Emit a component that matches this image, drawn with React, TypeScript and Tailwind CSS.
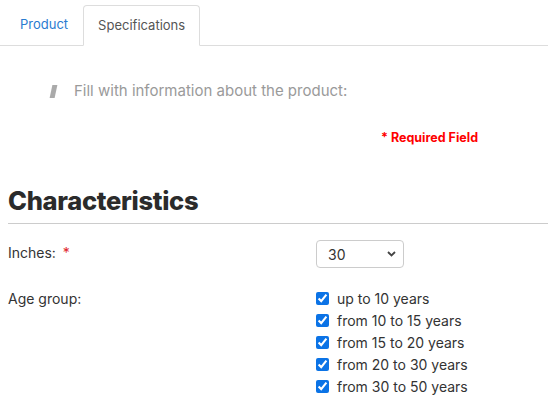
import React, { useState } from "react";

const AGE_GROUPS = [
  "up to 10 years",
  "from 10 to 15 years",
  "from 15 to 20 years",
  "from 20 to 30 years",
  "from 30 to 50 years",
];

export default function App() {
  const [tab, setTab] = useState("specs");
  const [inches, setInches] = useState("30");
  const [checked, setChecked] = useState<boolean[]>(AGE_GROUPS.map(() => true));

  return (
    <div className="w-[548px] h-[416px] bg-white overflow-hidden text-[#333] font-['Inter','Open_Sans',sans-serif]">
      {/* Tabs */}
      <div className="flex pl-[5px] pt-[5px] border-b border-[#ddd]">
        <button
          type="button"
          onClick={() => setTab("product")}
          className="h-[40px] px-[15px] text-[13px] text-[#2a7bd0] -mb-px"
        >
          Product
        </button>
        <button
          type="button"
          onClick={() => setTab("specs")}
          className="h-[41px] px-[14px] text-[13px] text-[#555] bg-white border border-[#ddd] border-b-white rounded-t-[4px] -mb-px"
        >
          Specifications
        </button>
      </div>

      {/* Intro */}
      <div className="flex items-center pl-[51px] pt-[34px]">
        <span className="w-[5px] h-[13px] bg-[#aaa] -skew-x-12 mr-[18px]" />
        <p className="text-[15px] text-[#9a9a9a]">Fill with information about the product:</p>
      </div>

      <div className="pl-[381px] pt-[26px] text-[12.5px] font-bold text-[#ff0000]">* Required Field</div>

      {/* Characteristics */}
      <div className="pl-[8px] pt-[38px]">
        <h2 className="text-[25.5px] font-extrabold text-[#2b2b2b] leading-[32px] tracking-[-0.3px] pb-[6px] border-b border-[#ccc]">
          Characteristics
        </h2>

        <div className="flex pt-[16px]">
          <div className="w-[308px] text-[14px] pt-[2px]">
            Inches: <span className="text-[#e0262b] ml-[3px]">*</span>
          </div>
          <div className="relative">
            <select
              value={inches}
              onChange={(e) => setInches(e.target.value)}
              className="appearance-none w-[88px] h-[28px] pl-[11px] text-[14px] border border-[#ccc] rounded-[4px] bg-white"
            >
              {["24", "30", "32", "40", "50"].map((v) => (
                <option key={v} value={v}>{v}</option>
              ))}
            </select>
            <svg className="absolute right-[8px] top-[11px] pointer-events-none" width="9" height="6" viewBox="0 0 9 6">
              <path d="M1 1l3.5 3.5L8 1" fill="none" stroke="#444" strokeWidth="1.8" />
            </svg>
          </div>
        </div>

        <div className="flex pt-[19px]">
          <div className="w-[308px] text-[14px] pt-[1px]">Age group:</div>
          <div className="flex flex-col">
            {AGE_GROUPS.map((g, i) => (
              <label key={g} className="flex items-center h-[22px] text-[14px] text-[#333]">
                <input
                  type="checkbox"
                  checked={checked[i]}
                  onChange={() => setChecked((p) => p.map((c, j) => (j === i ? !c : c)))}
                  className="w-[13px] h-[13px] mr-[8px] accent-[#0b73e6]"
                />
                {g}
              </label>
            ))}
          </div>
        </div>
      </div>
    </div>
  );
}
